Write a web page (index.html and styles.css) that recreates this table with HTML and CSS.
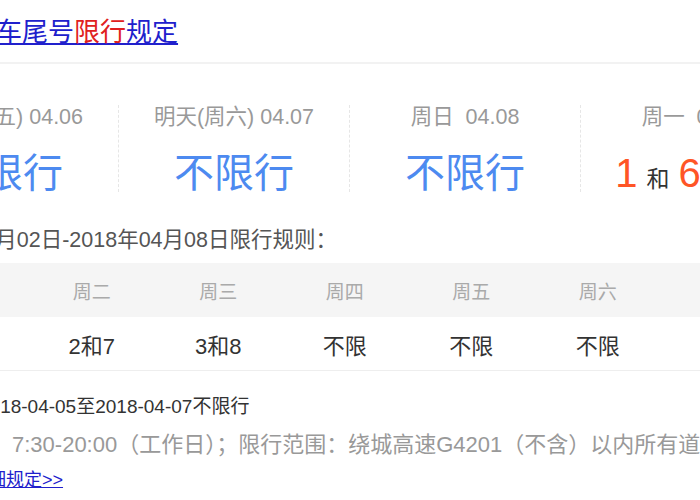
FILE: index.html
```html
<!DOCTYPE html>
<html lang="zh-CN">
<head>
    <meta charset="UTF-8">
    <title>车尾号限行规定</title>
    <link rel="stylesheet" href="styles.css">
</head>
<body>
    <div class="page">
        <h3 class="title">
            <a href="#">车尾号<em>限行</em>规定</a>
        </h3>

        <div class="days">
            <div class="day">
                <div class="day-label">今天(周五) 04.06</div>
                <div class="day-value">不限行</div>
            </div>
            <div class="day">
                <div class="day-label">明天(周六) 04.07</div>
                <div class="day-value">不限行</div>
            </div>
            <div class="day">
                <div class="day-label">周日&nbsp;&nbsp;04.08</div>
                <div class="day-value">不限行</div>
            </div>
            <div class="day">
                <div class="day-label">周一&nbsp;&nbsp;04.09</div>
                <div class="day-value num">1<small>和</small>6</div>
            </div>
        </div>

        <p class="rule-title">2018年04月02日-2018年04月08日限行规则：</p>

        <table class="week">
            <thead>
                <tr>
                    <th>周一</th>
                    <th>周二</th>
                    <th>周三</th>
                    <th>周四</th>
                    <th>周五</th>
                    <th>周六</th>
                    <th>周日</th>
                </tr>
            </thead>
            <tbody>
                <tr>
                    <td>1和6</td>
                    <td>2和7</td>
                    <td>3和8</td>
                    <td>不限</td>
                    <td>不限</td>
                    <td>不限</td>
                    <td>不限</td>
                </tr>
            </tbody>
        </table>

        <p class="notice">2018-04-05至2018-04-07不限行</p>
        <p class="detail">7:30-20:00（工作日）；限行范围：绕城高速G4201（不含）以内所有道路</p>
        <a class="more" href="#">查看详细规定&gt;&gt;</a>
    </div>
</body>
</html>
```

FILE: styles.css
```css
html, body {
    margin: 0;
    padding: 0;
    background: #fff;
    overflow: hidden;
}
body {
    font-family: "Liberation Sans", Arial, "Noto Sans CJK SC", sans-serif;
    color: #333;
}
/* the card is wider than the window, its left part is cut off */
.page {
    width: 930px;
    margin-left: -112px;
}
.title {
    margin: 0;
    padding: 17px 0 15px 108px;
    font-size: 26px;
    line-height: 30px;
    font-weight: normal;
    border-bottom: 2px solid #f2f2f2;
}
.title a {
    color: #2020cc;
    text-decoration: underline;
}
.title em {
    font-style: normal;
    color: #e02020;
}

.days {
    display: flex;
    margin-top: 41px;
}
.day {
    width: 230px;
    height: 87px;
    text-align: center;
    border-left: 1px dashed #e6e6e6;
}
.day:first-child {
    border-left: none;
}
.day-label {
    font-size: 21.5px;
    line-height: 24px;
    color: #999;
}
.day-value {
    margin-top: 20px;
    font-size: 40px;
    line-height: 48px;
    color: #4d8af0;
}
.day-value.num {
    padding-right: 76px;
    color: #ff5526;
}
.day-value small {
    margin: 0 9px;
    font-size: 23px;
    color: #333;
}

.rule-title {
    margin: 36px 0 0 14px;
    font-size: 21.5px;
    line-height: 24px;
    color: #555;
}

.week {
    margin: 11px 0 0 14px;
    border-collapse: collapse;
    table-layout: fixed;
}
.week th, .week td {
    width: 126.5px;
    padding: 0;
    text-align: center;
    font-weight: normal;
}
.week th {
    height: 54px;
    font-size: 19px;
    color: #aaa;
    background: #f5f5f5;
}
.week td {
    height: 53px;
    font-size: 22px;
    color: #333;
    border-bottom: 1px solid #eee;
}

.notice {
    margin: 23px 0 0 91px;
    font-size: 19px;
    line-height: 26px;
    color: #333;
}
.detail {
    margin: 12px 0 0 124px;
    font-size: 22px;
    line-height: 26px;
    color: #999;
    white-space: nowrap;
}
.more {
    display: inline-block;
    margin: 9px 0 0 46px;
    font-size: 18px;
    line-height: 26px;
    color: #2020cc;
}
```
